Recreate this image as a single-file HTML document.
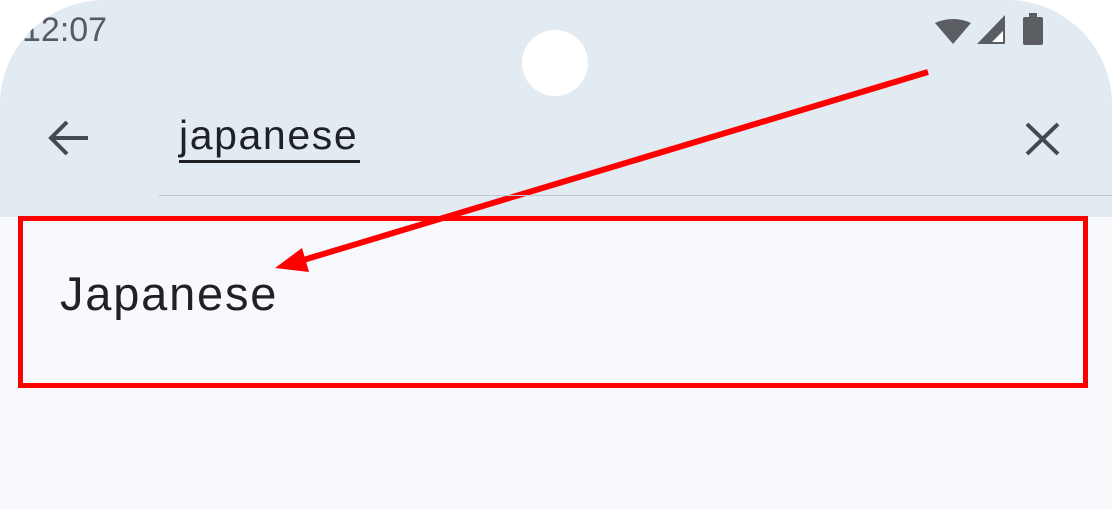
<!DOCTYPE html>
<html><head><style>
html,body{margin:0;padding:0;background:#fff;}
body{width:1112px;height:509px;position:relative;overflow:hidden;font-family:"Liberation Sans",sans-serif;}
.screen{position:absolute;left:0;top:0;width:1112px;height:509px;background:#f8f9fd;border-radius:105px 105px 0 0;overflow:hidden;}
.hdr{position:absolute;left:0;top:0;width:1112px;height:217px;background:#e2eaf2;}
.time{position:absolute;left:22px;top:11px;font-size:34px;color:#555b60;}
.cam{position:absolute;left:522px;top:30px;width:66px;height:66px;border-radius:50%;background:#fff;}
.q{position:absolute;left:179px;top:112px;font-size:41px;letter-spacing:1.6px;color:#1f2124;}
.qu{position:absolute;left:179px;top:160px;width:181px;height:3px;background:#1f2124;}
.line{position:absolute;left:159px;top:195px;width:960px;height:1px;background:#c2c9d0;}
.item{position:absolute;left:60px;top:266px;font-size:47px;letter-spacing:1.8px;color:#1f2124;}
.box{position:absolute;left:18px;top:216px;width:1060px;height:162px;border:5px solid #f00;}
</style></head><body>
<div class="screen">
<div class="hdr"></div>
<div class="time">12:07</div>
<div class="cam"></div>
<svg style="position:absolute;left:0;top:0" width="1112" height="509">
<path d="M935 23 A42 42 0 0 1 971 23 L953 44 Z" fill="#5a5e62"/>
<path d="M977 44 L1005 15 L1005 44 Z" fill="#5a5e62"/>
<path d="M992 42 L1003 31 L1003 42 Z" fill="#fff"/>
<rect x="1023" y="17" width="20" height="28" rx="2" fill="#5a5e62"/>
<rect x="1029" y="13" width="8" height="5" fill="#5a5e62"/>
<path d="M88 138 H52 M67 122 L51 138 L67 154" stroke="#454a50" stroke-width="4" fill="none"/>
<path d="M1027 124 L1058 154 M1058 124 L1027 154" stroke="#454a50" stroke-width="4" fill="none"/>
<line x1="928" y1="72" x2="300" y2="261" stroke="#f00" stroke-width="6"/>
<path d="M275 268 L302 248 L309 272 Z" fill="#f00"/>
</svg>
<div class="q">japanese</div>
<div class="qu"></div>
<div class="line"></div>
<div class="box"></div>
<div class="item">Japanese</div>
</div>
</body></html>
